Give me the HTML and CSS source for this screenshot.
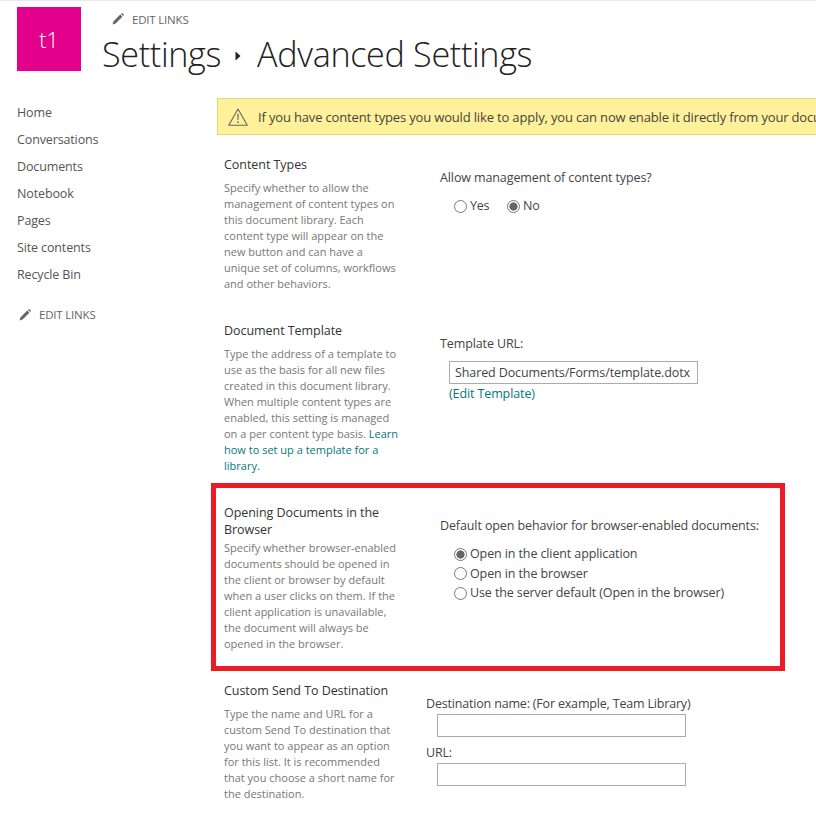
FILE: index.html
```html
<!DOCTYPE html>
<html lang="en">
<head>
<meta charset="utf-8">
<title>Settings - Advanced Settings</title>
<link rel="stylesheet" href="styles.css">
</head>
<body>
<header class="top">
  <div class="logo">t1</div>
  <div class="heading">
    <a class="edit-links edit-links-top"><svg class="pencil" viewBox="0 0 12 12"><path d="M0.5 11.5 L1.4 8.4 L8.2 1.6 L10.4 3.8 L3.6 10.6 Z M8.9 0.9 L9.7 0.3 Q10.2 0 10.7 0.4 L11.6 1.3 Q12 1.8 11.7 2.3 L11.1 3.1 Z"/></svg>EDIT LINKS</a>
    <h1 class="title"><span>Settings</span><svg class="crumb" viewBox="0 0 6 10"><path d="M0.5 0.5 L5.5 5 L0.5 9.5 Z"/></svg><span>Advanced Settings</span></h1>
  </div>
</header>
<div class="layout">
  <nav class="nav">
    <a>Home</a>
    <a>Conversations</a>
    <a>Documents</a>
    <a>Notebook</a>
    <a>Pages</a>
    <a>Site contents</a>
    <a>Recycle Bin</a>
    <a class="edit-links edit-links-nav"><svg class="pencil" viewBox="0 0 12 12"><path d="M0.5 11.5 L1.4 8.4 L8.2 1.6 L10.4 3.8 L3.6 10.6 Z M8.9 0.9 L9.7 0.3 Q10.2 0 10.7 0.4 L11.6 1.3 Q12 1.8 11.7 2.3 L11.1 3.1 Z"/></svg>EDIT LINKS</a>
  </nav>
  <main class="main">
    <div class="banner">
      <svg class="warn" viewBox="0 0 20 18"><path d="M10 1 L19.3 17.3 H0.7 Z" fill="none" stroke="#666" stroke-width="1.1" stroke-linejoin="round"/><path d="M9.3 6 H10.7 L10.5 12 H9.5 Z M9.2 13.4 H10.8 V15 H9.2 Z" fill="#666"/></svg>
      <span class="banner-text">If you have content types you would like to apply, you can now enable it directly from your document library.</span>
    </div>

    <section class="row row-types">
      <div class="info">
        <h2>Content Types</h2>
        <p>Specify whether to allow the management of content types on this document library. Each content type will appear on the new button and can have a unique set of columns, workflows and other behaviors.</p>
      </div>
      <div class="field field-types">
        <div class="label">Allow management of content types?</div>
        <div class="radio-inline">
          <label><input type="radio" name="ct">Yes</label>
          <label><input type="radio" name="ct" checked>No</label>
        </div>
      </div>
    </section>

    <section class="row row-template">
      <div class="info">
        <h2>Document Template</h2>
        <p>Type the address of a template to use as the basis for all new files created in this document library. When multiple content types are enabled, this setting is managed on a per content type basis. <a>Learn how to set up a template for a library.</a></p>
      </div>
      <div class="field field-template">
        <div class="label">Template URL:</div>
        <input class="text" type="text" value="Shared Documents/Forms/template.dotx">
        <a class="edit-template">(Edit Template)</a>
      </div>
    </section>

    <section class="row row-open">
      <div class="info">
        <h2>Opening Documents in the Browser</h2>
        <p>Specify whether browser-enabled documents should be opened in the client or browser by default when a user clicks on them. If the client application is unavailable, the document will always be opened in the browser.</p>
      </div>
      <div class="field field-open">
        <div class="label">Default open behavior for browser-enabled documents:</div>
        <div class="radio-stack">
          <label><input type="radio" name="op" checked>Open in the client application</label>
          <label><input type="radio" name="op">Open in the browser</label>
          <label><input type="radio" name="op">Use the server default (Open in the browser)</label>
        </div>
      </div>
    </section>

    <section class="row row-send">
      <div class="info">
        <h2>Custom Send To Destination</h2>
        <p>Type the name and URL for a custom Send To destination that you want to appear as an option for this list. It is recommended that you choose a short name for the destination.</p>
      </div>
      <div class="field field-send">
        <div class="label">Destination name: (For example, Team Library)</div>
        <input class="text" type="text">
        <div class="label label-url">URL:</div>
        <input class="text" type="text">
      </div>
    </section>
  </main>
</div>
</body>
</html>
```
FILE: styles.css
```css
* { box-sizing: border-box; }
html, body { margin: 0; height: 820px; overflow: hidden; background: #fff; }
body {
  font-family: "Open Sans", "Noto Sans", sans-serif;
  color: #444;
  border-top: 1px solid #eaeaea;
}
a { color: inherit; text-decoration: none; }

.top { display: flex; height: 97px; padding: 6px 0 0 17px; }
.logo {
  width: 64px; height: 64px; padding-top: 1px; background: #e3008c; color: #fff;
  display: flex; align-items: center; justify-content: center;
  font-size: 21.5px; font-weight: 300;
}
.heading { margin-left: 21px; }
.edit-links { display: flex; align-items: center; font-size: 11.5px; color: #666; letter-spacing: -0.2px; }
.edit-links-top { margin: 4px 0 0 10px; height: 16px; }
.pencil { width: 12px; height: 12px; fill: #666; margin-right: 8px; }
.title {
  display: flex; align-items: center; margin: 4px 0 0; height: 44px;
  font-size: 34.2px; font-weight: 300; color: #222; white-space: nowrap; letter-spacing: -0.35px;
}
.crumb { width: 6px; height: 10px; fill: #222; margin: 5px 16px 0 14px; }

.layout { display: flex; }
.nav { width: 217px; flex: none; padding: 1px 0 0 17px; display: flex; flex-direction: column; }
.nav > a { height: 27px; line-height: 27px; font-size: 12.5px; letter-spacing: -0.13px; color: #555; }
.nav > .edit-links-nav { margin: 13px 0 0 2px; font-size: 11.5px; letter-spacing: -0.2px; color: #666; }

.main { flex: 1; min-width: 0; }
.banner {
  width: 640px; height: 37px; display: flex; align-items: center; padding-left: 10px;
  background: #fff199; border: 1px solid #e2d77a; border-right: 0; white-space: nowrap; overflow: hidden;
}
.warn { width: 20px; height: 18px; flex: none; }
.banner-text { margin-left: 10px; font-size: 13px; letter-spacing: -0.16px; color: #444; }

.row { display: flex; position: relative; }
.info { width: 175px; margin-left: 7px; flex: none; }
.info h2 { margin: 0; font-size: 12.5px; font-weight: 400; line-height: 17px; letter-spacing: -0.05px; color: #333; }
.info p { margin: 0; font-size: 11px; line-height: 16px; color: #777; }
.info p a { color: #03787c; }
.label { font-size: 12.5px; line-height: 18px; letter-spacing: -0.11px; color: #444; }

.row-types { margin-top: 21px; height: 166px; }
.row-types h2 { margin-bottom: 7px; }
.field-types { margin: 13px 0 0 41px; }
.radio-inline { display: flex; gap: 18px; margin: 10px 0 0 14px; }
label { display: flex; align-items: center; font-size: 12.5px; line-height: 18px; letter-spacing: -0.11px; color: #444; }
.radio-inline label { letter-spacing: -0.3px; }
input[type=radio] {
  appearance: none; width: 13px; height: 13px; margin: 0 3px 0 0; border: 1px solid #777;
  border-radius: 50%; background: #fff; flex: none;
}
input[type=radio]:checked { background: radial-gradient(circle, #666 0 3.8px, #fff 4.4px); }

.row-template { height: 149px; }
.row-template h2 { margin-bottom: 7px; }
.field-template { margin: 13px 0 0 41px; }
.field-template .label { margin-bottom: 8px; }
.text {
  display: block; width: 249px; height: 23px; padding: 0 5px; border: 1px solid #ababab;
  font: 12.5px "Open Sans", "Noto Sans", sans-serif; letter-spacing: -0.11px; color: #444; background: #fff;
}
.field-template .text { margin: 0 0 0 9px; }
.edit-template { display: block; margin: 1px 0 0 9px; font-size: 12.5px; line-height: 18px; letter-spacing: -0.11px; color: #03787c; }

.row-open {
  width: 574px; height: 188px; margin: 12px 0 0 -6px; border: 5px solid #ed1c24; padding-top: 16px;
}
.row-open .info { margin-left: 8px; }
.row-open h2 { margin-bottom: 2px; }
.field-open { margin: 13px 0 0 41px; }
.radio-stack { margin: 10px 0 0 14px; display: flex; flex-direction: column; gap: 1.5px; }

.row-send { margin-top: 11px; }
.row-send h2 { margin-bottom: 7px; }
.field-send { margin: 13px 0 0 27px; }
.field-send .label { margin-bottom: 1px; letter-spacing: -0.18px; }
.field-send .text { margin-left: 11px; }
.field-send .label-url { margin-top: 7px; }
```
